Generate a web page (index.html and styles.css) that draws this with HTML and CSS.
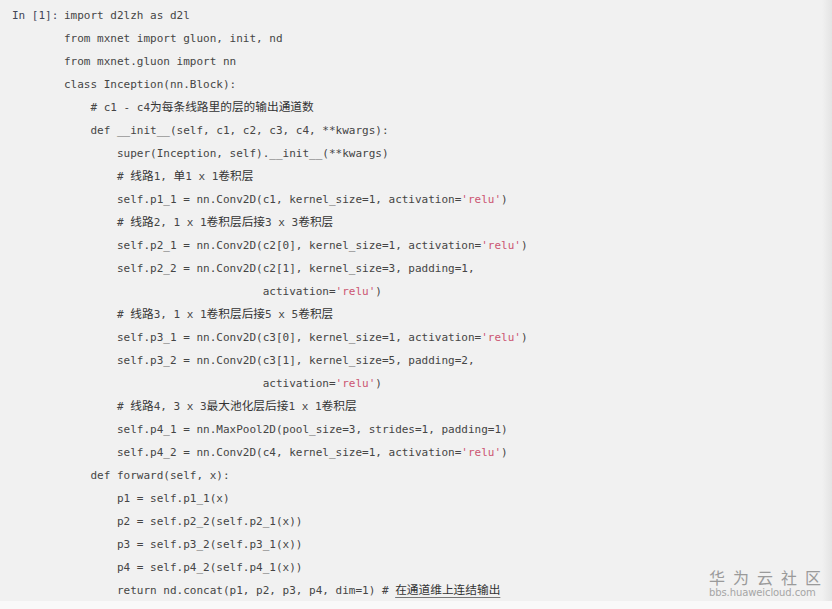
FILE: index.html
```html
<!DOCTYPE html>
<html>
<head>
<meta charset="utf-8">
<link rel="stylesheet" href="styles.css">
</head>
<body>
<div class="page">
  <div class="cell">
    <div class="prompt">In [1]:</div>
<pre class="code">import d2lzh as d2l
from mxnet import gluon, init, nd
from mxnet.gluon import nn
class Inception(nn.Block):
    # c1 - c4<span class="zh">为每条线路里的层的输出通道数</span>
    def __init__(self, c1, c2, c3, c4, **kwargs):
        super(Inception, self).__init__(**kwargs)
        # <span class="zh">线路</span>1, <span class="zh">单</span>1 x 1<span class="zh">卷积层</span>
        self.p1_1 = nn.Conv2D(c1, kernel_size=1, activation=<span class="str">'relu'</span>)
        # <span class="zh">线路</span>2, 1 x 1<span class="zh">卷积层后接</span>3 x 3<span class="zh">卷积层</span>
        self.p2_1 = nn.Conv2D(c2[0], kernel_size=1, activation=<span class="str">'relu'</span>)
        self.p2_2 = nn.Conv2D(c2[1], kernel_size=3, padding=1,
                              activation=<span class="str">'relu'</span>)
        # <span class="zh">线路</span>3, 1 x 1<span class="zh">卷积层后接</span>5 x 5<span class="zh">卷积层</span>
        self.p3_1 = nn.Conv2D(c3[0], kernel_size=1, activation=<span class="str">'relu'</span>)
        self.p3_2 = nn.Conv2D(c3[1], kernel_size=5, padding=2,
                              activation=<span class="str">'relu'</span>)
        # <span class="zh">线路</span>4, 3 x 3<span class="zh">最大池化层后接</span>1 x 1<span class="zh">卷积层</span>
        self.p4_1 = nn.MaxPool2D(pool_size=3, strides=1, padding=1)
        self.p4_2 = nn.Conv2D(c4, kernel_size=1, activation=<span class="str">'relu'</span>)
    def forward(self, x):
        p1 = self.p1_1(x)
        p2 = self.p2_2(self.p2_1(x))
        p3 = self.p3_2(self.p3_1(x))
        p4 = self.p4_2(self.p4_1(x))
        return nd.concat(p1, p2, p3, p4, dim=1) # <span class="zh ul">在通道维上连结输出</span></pre>
  </div>
  <div class="watermark">
    <div class="wm-title">华为云社区</div>
    <div class="wm-url">bbs.huaweicloud.com</div>
  </div>
</div>
</body>
</html>
```

FILE: styles.css
```css
html, body {
  margin: 0;
  padding: 0;
}
body {
  width: 832px;
  height: 609px;
  overflow: hidden;
  background: linear-gradient(to right, #f1f1f1 0, #f1f1f1 822px, #ececec 826px, #e4e4e4 832px);
}
.page {
  position: relative;
  width: 832px;
  height: 609px;
}
.page::after {
  content: "";
  position: absolute;
  left: 0;
  right: 0;
  bottom: 0;
  height: 8px;
  background: #f9f9f9;
}
.cell {
  display: flex;
  padding: 4px 0 0 12px;
}
.prompt {
  width: 52px;
  flex: none;
  font-family: "DejaVu Sans Mono", "Liberation Mono", monospace;
  font-size: 11px;
  line-height: 23px;
  color: #3f4658;
}
.code {
  margin: 0;
  font-family: "DejaVu Sans Mono", "Liberation Mono", monospace;
  font-size: 11px;
  line-height: 23px;
  color: #454545;
  white-space: pre;
}
.zh {
  font-family: "Noto Sans CJK SC", sans-serif;
  font-size: 11.7px;
  line-height: 1;
  color: #333;
}
.ul {
  text-decoration: underline;
  text-decoration-color: #777;
  text-underline-offset: 3px;
}
.str {
  color: #cc5572;
}
.watermark {
  position: absolute;
  left: 709px;
  top: 567px;
  width: 112px;
  color: #9a9a9a;
  font-family: "Noto Sans CJK SC", sans-serif;
  z-index: 2;
}
.wm-title {
  font-size: 16px;
  line-height: 20px;
  letter-spacing: 8px;
  white-space: nowrap;
}
.wm-url {
  font-family: "DejaVu Sans", sans-serif;
  font-size: 10px;
  line-height: 12px;
  letter-spacing: -0.1px;
  color: #a5a5a5;
}
```
